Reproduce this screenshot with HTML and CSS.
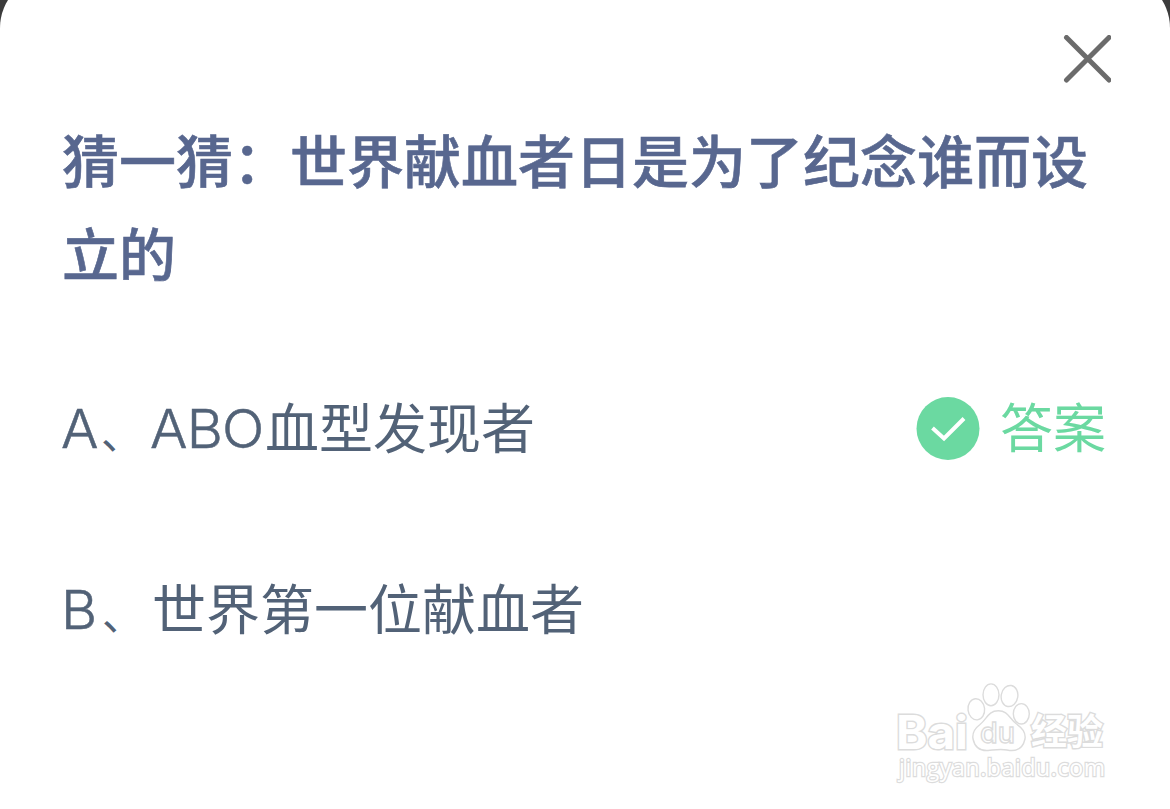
FILE: index.html
```
<!DOCTYPE HTML>
<html lang="zh-CN">
<head>
<meta charset="utf-8">
<title>猜一猜</title>
<link rel="stylesheet" href="styles.css">
</head>

<body>
	<div class="card">
		<div class="top">
			<svg class="close" width="48" height="48" viewBox="0 0 48 48"><path d="M3.5 2.5L46 45M46 2.5L3.5 45" /></svg>
		</div>
		<h1>猜一猜：世界献血者日是为了纪念谁而设立的</h1>
		<ul>
			<li>
				<span class="txt"><i class="en a">A</i><i class="dun">、</i><i class="en abo">ABO</i>血型发现者</span>
				<span class="answer">
					<svg width="64" height="64" viewBox="0 0 64 64"><circle cx="32" cy="31.5" r="31.5" /><path d="M16.5 31L28 41.5L48 21.5" /></svg>
					<b>答案</b>
				</span>
			</li>
			<li>
				<span class="txt"><i class="en b">B</i><i class="dun">、</i>世界第一位献血者</span>
			</li>
		</ul>
		<div class="mark">
			<svg width="224" height="110" viewBox="0 0 224 110">
				<text class="bai" x="6" y="67.5" textLength="72" lengthAdjust="spacingAndGlyphs">Bai</text>
				<ellipse cx="86.3" cy="28.3" rx="8.3" ry="10.6" transform="rotate(-6 86.3 28.3)" />
				<ellipse cx="101" cy="13.8" rx="8" ry="10.9" />
				<ellipse cx="119.5" cy="15" rx="8.3" ry="10.6" transform="rotate(10 119.5 15)" />
				<ellipse cx="131.3" cy="32.8" rx="8" ry="10.2" />
				<path d="M108.3 29.8C98 29.8 97 38 90 43.5C84 48 82 52 83 58C85 67 90 70 98 69.5C104 69 110 67.5 117 69C127 71 133 67 135 58C136 51 132 47 126 42.5C119 37 118 29.8 108.3 29.8Z" />
				<text class="du" x="90" y="62" textLength="35" lengthAdjust="spacingAndGlyphs">du</text>
				<text class="jy" x="141" y="64" textLength="72">经验</text>
				<text class="url" x="9" y="95" textLength="206">jingyan.baidu.com</text>
			</svg>
		</div>
	</div>
</body>
</html>
```
FILE: styles.css
```
* {margin:0; padding:0; box-sizing:border-box;}
li{list-style:none; }
body{background:#3c3c3c;width:1170px;height:809px;overflow:hidden;font-family:Inter,"Noto Sans CJK SC",sans-serif;}
.card{height:834px;margin-top:-25px;background:#fff;border-radius:53px 53px 0 0;padding:60px 59px 0 62px;position:relative;}
.top{height:81px;display:flex;justify-content:flex-end;}
.close path{stroke:#6b6b6b;stroke-width:5;fill:none;stroke-linecap:round;}
h1{font-size:57px;line-height:93px;font-weight:500;color:#58678f;-webkit-text-stroke:.6px #58678f;}
ul{padding-top:36px;}
li{height:181px;display:flex;justify-content:space-between;align-items:center;}
.txt{height:90px;line-height:83px;font-size:54px;color:#526277;font-family:"Noto Sans CJK SC",sans-serif;white-space:nowrap;}
.txt i{font-style:normal;display:inline-block;}
.en{font-family:Inter,sans-serif;font-weight:300;-webkit-text-stroke:.5px #526277;transform:scaleX(1.03);transform-origin:left;}
.txt .en{line-height:60px;vertical-align:1px;}
.a{width:39px;margin-left:-1px;}
.b{width:40px;margin-left:-1px;}
.dun{width:50px;font-size:42px;line-height:40px;text-indent:1px;}
.abo{width:115px;letter-spacing:-.8px;}
.b + .dun{width:51px;}
.answer{display:flex;align-items:center;color:#6bd9a1;margin-right:5px;}
.answer b{height:80px;line-height:81px;font-size:53px;font-weight:400;margin-left:20px;}
.answer circle{fill:#6bd9a1;}
.answer svg path{stroke:#fff;stroke-width:4;fill:none;}
/* 水印 */
.mark{position:absolute;left:890px;top:706px;}
.mark svg{display:block;fill:#fff;stroke:#dcdcdc;stroke-width:1.4;}
.bai{font-size:46px;font-weight:700;paint-order:stroke;stroke-width:2.8;}
.du{font-size:29px;font-weight:500;}
.jy{font-size:36px;font-weight:700;paint-order:stroke;stroke-width:2.8;}
.url{font-family:"Open Sans",sans-serif;font-size:23px;font-weight:500;paint-order:stroke;stroke-width:2.4;}
```
